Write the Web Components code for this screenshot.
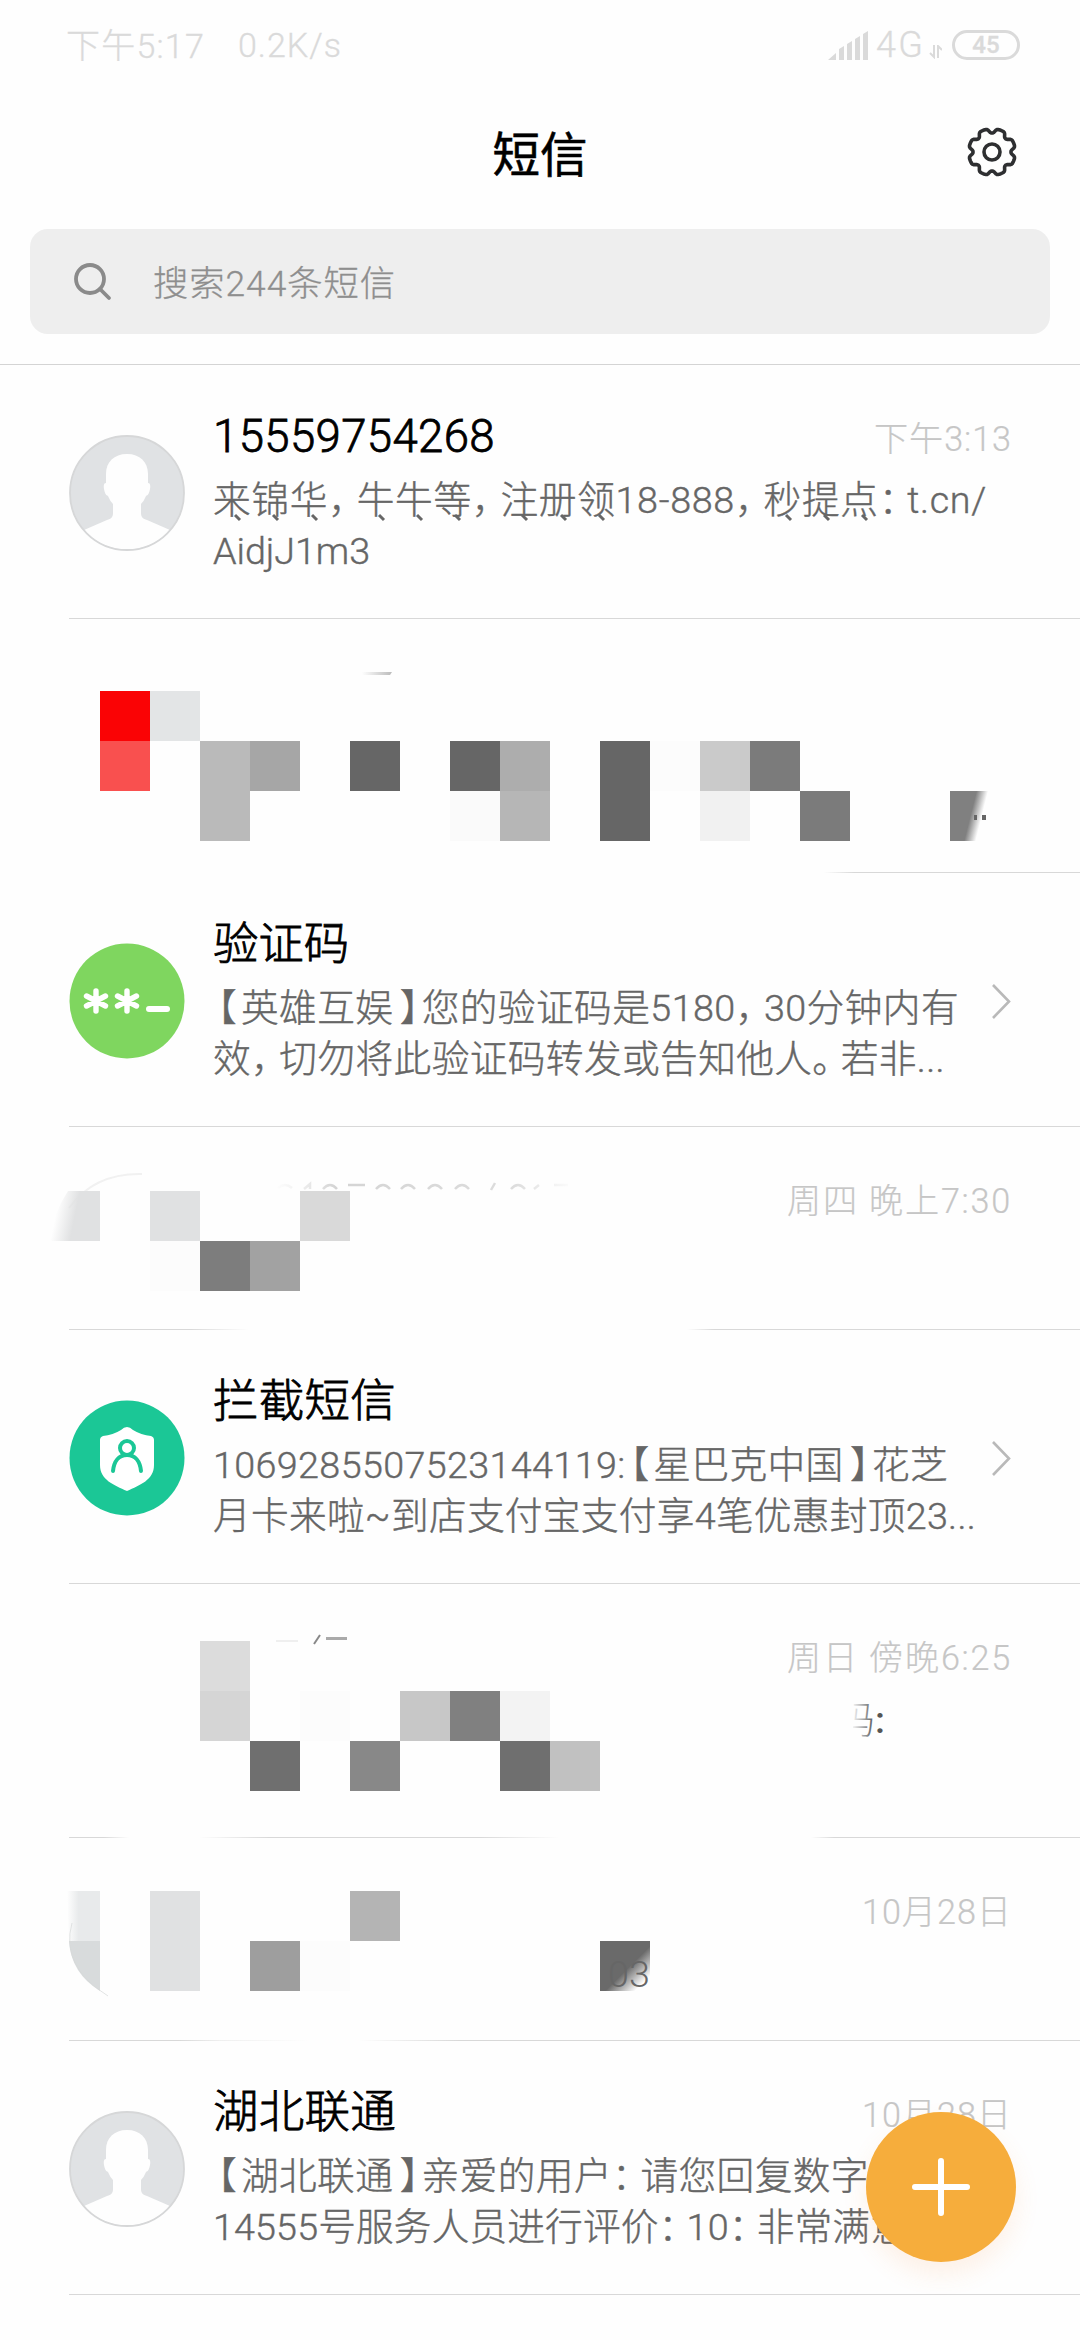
<!DOCTYPE html>
<html lang="zh-CN">
<head>
<meta charset="utf-8">
<title>短信</title>
<style>
  html, body {
    margin: 0;
    background: #fefefe;
  }
  body {
    width: 1080px;
    height: 2340px;
    overflow: hidden;
    font-family: Roboto, "Noto Sans CJK SC", sans-serif;
    font-weight: 300;
  }
</style>
</head>
<body>
<sms-app>
  <status-bar slot="top"></status-bar>
  <app-header slot="top">短信</app-header>
  <search-box slot="top">搜索244条短信</search-box>

  <msg-row>
    <contact-avatar slot="avatar"></contact-avatar>
    <fit-text slot="name" width="282">15559754268</fit-text>
    <fit-text slot="time" width="138">下午3:13</fit-text>
    <fit-text width="774"><u>来</u><u>锦</u><u>华</u>，<u>牛</u><u>牛</u><u>等</u>，<u>注</u><u>册</u><u>领</u>18-888，<u>秒</u><u>提</u><u>点</u>：t.cn/</fit-text>
    <fit-text width="157">AidjJ1m3</fit-text>
  </msg-row>

  <msg-row style="--line: linear-gradient(90deg, transparent 755px, #d8d8d8 785px)">
    <svg slot="mosaic" viewBox="0 618 1080 254">
      <defs>
        <linearGradient id="fadeR" x1="0" y1="0" x2="1" y2=".25"><stop offset=".5" stop-color="#808080"/><stop offset=".72" stop-color="#808080" stop-opacity="0"/></linearGradient>
        <linearGradient id="tip"><stop offset="0" stop-color="#bbb" stop-opacity="0"/><stop offset="1" stop-color="#bbb"/></linearGradient>
      </defs>
      <path d="M362 671h30l-2 3h-28z" fill="url(#tip)"/>
      <path d="M100 690h50v50h-50z" fill="#fa0305"/>
      <path d="M150 690h50v50h-50z" fill="#e3e5e6"/>
      <path d="M100 740h50v50h-50z" fill="#f9504f"/>
      <path d="M200 740h50v100h-50z" fill="#bababa"/>
      <path d="M250 740h50v50h-50z" fill="#a6a6a6"/>
      <path d="M350 740h50v50h-50zM450 740h50v50h-50zM600 740h50v100h-50z" fill="#666"/>
      <path d="M500 740h50v50h-50z" fill="#adadad"/>
      <path d="M650 740h50v50h-50z" fill="#fcfcfc"/>
      <path d="M700 740h50v50h-50z" fill="#cacaca"/>
      <path d="M750 740h50v50h-50zM800 790h50v50h-50z" fill="#7b7b7b"/>
      <path d="M450 790h50v50h-50z" fill="#fafafa"/>
      <path d="M500 790h50v50h-50z" fill="#b6b6b6"/>
      <path d="M700 790h50v50h-50z" fill="#f1f1f1"/>
      <path d="M950 790h50v50h-50z" fill="url(#fadeR)"/>
      <path d="M974 814h3v5h-3zM982 814h4v5h-4z" fill="#666"/>
    </svg>
  </msg-row>

  <msg-row arrow>
    <code-avatar slot="avatar"></code-avatar>
    <fit-text slot="name" width="136">验证码</fit-text>
    <fit-text width="746">【英雄互娱】您的验证码是5180，30分钟内有</fit-text>
    <fit-text width="732">效，切勿将此验证码转发或告知他人。若非...</fit-text>
  </msg-row>

  <msg-row short style="--line: linear-gradient(90deg, #d8d8d8 120px, transparent 180px, transparent 618px, #d8d8d8 645px)">
    <fit-text slot="time" width="225">周四 晚上7:30</fit-text>
    <svg slot="mosaic" viewBox="0 1126 1080 203">
      <defs>
        <linearGradient id="fadeL" x1="0" y1=".4" x2="1" y2=".6"><stop offset=".12" stop-color="#e0e1e2" stop-opacity="0"/><stop offset=".5" stop-color="#e0e1e2"/></linearGradient>
        <linearGradient id="ghost" gradientUnits="userSpaceOnUse" x1="275" y1="0" x2="575" y2="0"><stop offset="0" stop-color="#ddd" stop-opacity="0"/><stop offset=".2" stop-color="#d4d4d4"/><stop offset=".8" stop-color="#ddd"/><stop offset="1" stop-color="#ddd" stop-opacity="0"/></linearGradient>
      </defs>
      <path d="M69 1207Q94 1172 142 1173" fill="none" stroke="#f1f1f1" stroke-width="2"/>
      <path d="M278 1187q7-6 14 0M304 1188l6-5v5M323 1188q7-8 14 0M348 1184h17M376 1188q7-8 14 0M401 1188q7-8 14 0M428 1188q7-8 14 0M455 1188q7-8 14 0M491 1189l4-7M511 1188q7-8 14 0M534 1188l5-4M554 1184h14" fill="none" stroke="url(#ghost)" stroke-width="2.5"/>
      <path d="M68 1190h32v50H50q3-28 18-50z" fill="url(#fadeL)"/>
      <path d="M150 1190h50v50h-50z" fill="#e0e1e2"/>
      <path d="M300 1190h50v50h-50z" fill="#d9d9d9"/>
      <path d="M150 1240h50v50h-50z" fill="#fcfcfc"/>
      <path d="M200 1240h50v50h-50z" fill="#7d7d7d"/>
      <path d="M250 1240h50v50h-50z" fill="#a2a2a2"/>
    </svg>
  </msg-row>

  <msg-row arrow>
    <shield-avatar slot="avatar"></shield-avatar>
    <fit-text slot="name" width="183">拦截短信</fit-text>
    <fit-text width="735">1069285507523144119:【星巴克中国】花芝</fit-text>
    <fit-text width="763">月卡来啦~到店支付宝支付享4笔优惠封顶23...</fit-text>
  </msg-row>

  <msg-row style="--line: linear-gradient(90deg, #d8d8d8 35px, transparent 60px, transparent 130px, #d8d8d8 200px, #d8d8d8 410px, transparent 490px, transparent 742px, #d8d8d8 765px)">
    <fit-text slot="time" width="225">周日 傍晚6:25</fit-text>
    <svg slot="mosaic" viewBox="0 1583 1080 254">
      <defs>
        <linearGradient id="reveal" gradientUnits="userSpaceOnUse" x1="851" y1="0" x2="874" y2="0"><stop offset="0" stop-color="#666" stop-opacity="0"/><stop offset="1" stop-color="#555"/></linearGradient>
        <clipPath id="half"><path d="M853 1690h60v60h-60z"/></clipPath>
      </defs>
      <path d="M314 1643l6-9" stroke="#888" stroke-width="2"/>
      <path d="M326 1636h21v3h-21z" fill="#aaa"/>
      <path d="M276 1640h22" stroke="#efefef" stroke-width="2"/>
      <path d="M200 1640h50v50h-50z" fill="#dcdcdc"/>
      <path d="M200 1690h50v50h-50z" fill="#d5d5d5"/>
      <path d="M300 1690h50v50h-50z" fill="#fcfcfc"/>
      <path d="M400 1690h50v50h-50z" fill="#c7c7c7"/>
      <path d="M450 1690h50v50h-50z" fill="#808080"/>
      <path d="M500 1690h50v50h-50z" fill="#f3f3f3"/>
      <path d="M250 1740h50v50h-50zM500 1740h50v50h-50z" fill="#6f6f6f"/>
      <path d="M350 1740h50v50h-50z" fill="#888"/>
      <path d="M550 1740h50v50h-50z" fill="#c1c1c1"/>
      <text x="837" y="1732" font-size="37.7" fill="url(#reveal)" clip-path="url(#half)">码</text>
      <text x="875" y="1732" font-size="37.7" font-weight="500" fill="#555">:</text>
    </svg>
  </msg-row>

  <msg-row short style="--line: linear-gradient(90deg, #d8d8d8 110px, #efefef 150px, transparent 240px, transparent 290px, #d8d8d8 390px)">
    <fit-text slot="time" width="150">10月28日</fit-text>
    <svg slot="mosaic" viewBox="0 1837 1080 203">
      <defs>
        <linearGradient id="edge"><stop offset="0" stop-color="#e8eaeb" stop-opacity="0"/><stop offset=".35" stop-color="#e8eaeb"/></linearGradient>
        <linearGradient id="corner" x1="0" y1="0" x2="1" y2="1"><stop offset=".55" stop-color="#6a6a6a"/><stop offset=".85" stop-color="#6a6a6a" stop-opacity="0"/></linearGradient>
      </defs>
      <path d="M67 1890h33v50H69z" fill="url(#edge)"/>
      <path d="M69 1940h31v50q-29-18-31-50z" fill="#d8dbdc"/>
      <path d="M72 1922Q60 1965 108 1995" fill="none" stroke="#d5d8d9" stroke-width="1" opacity=".7"/>
      <path d="M150 1890h50v100h-50z" fill="#e0e1e2"/>
      <path d="M350 1890h50v50h-50z" fill="#b4b4b4"/>
      <path d="M250 1940h50v50h-50z" fill="#9e9e9e"/>
      <path d="M300 1940h50v50h-50z" fill="#fcfcfc"/>
      <path d="M600 1940h50v50h-50z" fill="url(#corner)"/>
      <text x="608" y="1986" font-size="37.7" fill="#666">03</text>
    </svg>
  </msg-row>

  <msg-row>
    <contact-avatar slot="avatar"></contact-avatar>
    <fit-text slot="name" width="183">湖北联通</fit-text>
    <fit-text slot="time" width="150">10月28日</fit-text>
    <fit-text width="656">【湖北联通】亲爱的用户：请您回复数字</fit-text>
    <fit-text width="695">14555号服务人员进行评价：10：非常满意</fit-text>
  </msg-row>

  <compose-button slot="float"></compose-button>
</sms-app>

<script>
class ShadowElement extends HTMLElement {
  constructor() {
    super();
    this.attachShadow({mode: 'open'});
    this.shadowRoot.innerHTML = this.constructor.template;
  }
}

class SmsApp extends ShadowElement {
  static get template() {
    return `
    <style>
      :host {
        display: flex;
        flex-direction: column;
        position: relative;
        width: 1080px;
        height: 2340px;
      }
      header {
        box-sizing: border-box;
        height: 365px;
        border-bottom: 1px solid #d4d4d4;
      }
      main {
        display: flex;
        flex-direction: column;
      }
    </style>
    <header><slot name="top"></slot></header>
    <main><slot></slot></main>
    <slot name="float"></slot>`;
  }
}

class StatusBar extends ShadowElement {
  static get template() {
    return `
    <style>
      :host {
        display: flex;
        align-items: center;
        box-sizing: border-box;
        height: 92px;
        padding: 0 60px 0 66px;
        color: #dadada;
        font-size: 34px;
        -webkit-text-stroke: .3px;
      }
      .clock { margin-top: -5px; }
      .speed { margin: -2px auto 0 33px; }
      .network { font-size: 36px; margin: -2px 0 0 7px; }
      .battery {
        display: flex;
        align-items: center;
        justify-content: center;
        box-sizing: border-box;
        width: 68px;
        height: 30px;
        margin: -3px 0 0 10px;
        border: 3px solid #dadada;
        border-radius: 15px;
        font-size: 24px;
        font-weight: 500;
      }
    </style>
    <fit-text class="clock" width="139">下午5:17</fit-text>
    <fit-text class="speed" width="104">0.2K/s</fit-text>
    <svg width="41" height="30" fill="#dadada"><path d="M0 29l8-7v7zM11 18l5-3v14h-5zM19 13l5-3v19h-5zM27 8l5-3v24h-5zM35 3l5-3v29h-5z"/></svg>
    <fit-text class="network" width="49">4G</fit-text>
    <svg width="13" height="14" style="margin:12px 0 0 4px" fill="none" stroke="#dadada" stroke-width="2"><path d="M5 0v12l-4-4M9 13V1l4 4"/></svg>
    <div class="battery">45</div>`;
  }
}

class AppHeader extends ShadowElement {
  static get template() {
    return `
    <style>
      :host {
        display: grid;
        grid-template-columns: 1fr auto 1fr;
        align-items: center;
        box-sizing: border-box;
        height: 137px;
        padding: 0 62px;
        color: #000;
        font-size: 47.5px;
        font-weight: 400;
        -webkit-text-stroke: .6px;
      }
      .title { grid-column: 2; margin-top: -19px; }
      svg { justify-self: end; margin-top: -17px; }
    </style>
    <span class="title"><slot></slot></span>
    <svg width="52" height="52" viewBox="-26 -26 52 52" fill="none" stroke="#2e2f31" stroke-width="3.6" stroke-linejoin="round">
      <path class="gear"/>
      <circle r="8"/>
    </svg>`;
  }

  // eight flat teeth, with the notches on the axes and diagonals
  connectedCallback() {
    const points = [];
    for (let deg = 0; deg < 360; deg += 2.5) {
      const fromNotch = Math.min(deg % 45, 45 - deg % 45);
      const radius = 23.4 - 4.4 * Math.exp(-Math.pow(fromNotch / 9.5, 3));
      const rad = deg * Math.PI / 180;
      points.push(`${(radius * Math.cos(rad)).toFixed(2)} ${(radius * Math.sin(rad)).toFixed(2)}`);
    }
    this.shadowRoot.querySelector('.gear').setAttribute('d', `M${points.join('L')}Z`);
  }
}

class SearchBox extends ShadowElement {
  static get template() {
    return `
    <style>
      :host {
        display: flex;
        align-items: center;
        box-sizing: border-box;
        height: 105px;
        margin: 0 30px;
        padding-left: 43px;
        gap: 41px;
        border-radius: 18px;
        background: #eee;
        color: #8e8e8e;
        font-size: 35.3px;
        -webkit-text-stroke: .3px;
      }
      fit-text { margin-top: -3px; }
    </style>
    <svg width="39" height="39" fill="none" stroke="#8a8a8a" stroke-width="3.8" stroke-linecap="round"><circle cx="17" cy="17" r="14"/><path d="M27 27l9 9"/></svg>
    <fit-text width="243"><slot></slot></fit-text>`;
  }
}

// One line of text whose tracking is set so that it takes up the given width
class FitText extends ShadowElement {
  static get template() {
    return `
    <style>
      :host { display: block; white-space: nowrap; }
      .line { display: inline-block; }
    </style>
    <span class="line"><slot></slot></span>`;
  }

  connectedCallback() {
    if (!this.ready) {
      this.ready = true;
      this.prepare();
    }
    this.fit();
  }

  // punctuation is set half width, with a little air on its open side
  prepare() {
    const margins = {'【': '0 .1em 0 .13em', '】': '0 .07em 0 .17em'};
    for (const node of [...this.childNodes]) {
      if (node.nodeType !== Node.TEXT_NODE) continue;
      const parts = node.data.split(/([，。：【】])/);
      if (parts.length === 1) continue;
      node.replaceWith(...parts.filter(Boolean).map(part => {
        if (!/^[，。：【】]$/.test(part)) return part;
        const span = document.createElement('span');
        span.textContent = part;
        span.style.fontFeatureSettings = '"halt"';
        span.style.margin = margins[part] || '0 .24em 0 0';
        return span;
      }));
    }
    for (const mark of this.querySelectorAll('u')) {
      mark.style.cssText = 'text-decoration:none;position:relative';
      const tick = document.createElement('i');
      tick.style.cssText = 'position:absolute;left:23px;bottom:1px;width:3px;height:7px;background:#666;transform:rotate(-45deg)';
      mark.append(tick);
    }
  }

  fit() {
    const target = parseFloat(this.getAttribute('width'));
    const line = this.shadowRoot.querySelector('.line');
    line.style.letterSpacing = '0';
    const count = (this.textContent.trim() || this.getRootNode().host.textContent.trim()).length;
    const spacing = (target - line.getBoundingClientRect().width) / count;
    line.style.letterSpacing = `${spacing}px`;
  }
}

class MsgRow extends ShadowElement {
  static get template() {
    return `
    <style>
      :host {
        display: grid;
        grid-template-columns: 144px 1fr;
        position: relative;
        box-sizing: border-box;
        height: 254px;
        padding: 0 0 0 69px;
        --line: #d8d8d8;
      }
      :host([short]) { height: 203px; }
      :host::after {
        content: "";
        position: absolute;
        left: 69px;
        right: 0;
        bottom: 0;
        height: 1px;
        background: var(--line);
      }
      .avatar { padding-top: 70px; }
      .head {
        display: flex;
        justify-content: space-between;
        align-items: center;
        height: 60px;
        margin-top: 42px;
        padding-right: 68px;
      }
      .name { color: #000; font-size: 45.5px; line-height: 60px; -webkit-text-stroke: .8px; }
      .time { color: #c6c6c6; font-size: 34.2px; line-height: 50px; padding-top: 3px; -webkit-text-stroke: .2px; }
      .body { color: #666; font-size: 37.7px; line-height: 51px; margin-top: 8px; -webkit-text-stroke: .4px; }
      .arrow { display: none; position: absolute; right: 68px; top: 110px; }
      :host([arrow]) .arrow { display: block; }
      ::slotted(svg) { position: absolute; left: 0; top: 0; width: 1080px; height: 100%; }
    </style>
    <div class="avatar"><slot name="avatar"></slot></div>
    <div>
      <div class="head">
        <div class="name"><slot name="name"></slot></div>
        <div class="time"><slot name="time"></slot></div>
      </div>
      <div class="body"><slot></slot></div>
    </div>
    <svg class="arrow" width="21" height="37" fill="none" stroke="#b9b9b9" stroke-width="2.6"><path d="M2 2l16 16.500l-16 16.500"/></svg>
    <slot name="mosaic"></slot>`;
  }
}

const avatarStyle = '<style>:host { display: block; width: 116px; height: 116px; } svg { display: block; }</style>';

class ContactAvatar extends ShadowElement {
  static get template() {
    return `${avatarStyle}
    <svg width="116" height="116">
      <circle cx="58" cy="58" r="57.200" fill="#e0e2e4"/>
      <path fill="#fefefe" d="M58 19c13 0 21 8 21 20v9q3 0 2 6c-1 5-2 6-4 7q-2 5-5 8v9c0 4 2 6 6 7l23 10A57 57 0 0 1 15 95l23-10c4-1 6-3 6-7v-9q-3-3-5-8c-2-1-3-2-4-7q-1-6 2-6v-9c0-12 8-20 21-20z"/>
      <circle cx="58" cy="58" r="57" fill="none" stroke="#d6d7d8" stroke-width="1.800"/>
    </svg>`;
  }
}

class CodeAvatar extends ShadowElement {
  static get template() {
    return `${avatarStyle}
    <svg width="116" height="116" stroke="#fff" stroke-width="5.400" stroke-linecap="round">
      <circle cx="58" cy="58" r="57.500" fill="#7fd65f" stroke="none"/>
      <path d="M27 48v20M17.500 53l19 10M17.500 63l19-10M58 48v20M48.500 53l19 10M48.500 63l19-10"/>
      <path d="M80 66h18" stroke-width="6"/>
    </svg>`;
  }
}

class ShieldAvatar extends ShadowElement {
  static get template() {
    return `${avatarStyle}
    <svg width="116" height="116">
      <circle cx="58" cy="58" r="57.500" fill="#1bc796"/>
      <path fill="#fff" d="M58 27q3 0 6 3 8 5 18 6 3 1 3 4v25c0 15-14 20-27 26-13-6-27-11-27-26V40q0-3 3-4 10-1 18-6 3-3 6-3z"/>
      <g fill="none" stroke="#1bc796" stroke-width="4" stroke-linecap="round"><circle cx="58" cy="48" r="7"/><path d="M44 71c1-10 6-16 14-16s13 6 14 16"/></g>
    </svg>`;
  }
}

class ComposeButton extends ShadowElement {
  static get template() {
    return `
    <style>
      :host {
        position: absolute;
        left: 866px;
        top: 2112px;
        width: 150px;
        height: 150px;
        border-radius: 50%;
        background: #f6ad3c;
        box-shadow: 0 12px 24px rgba(246, 140, 60, .12);
      }
    </style>
    <svg width="150" height="150" stroke="#fff" stroke-width="6" stroke-linecap="round"><path d="M75 49v52M49 75h52"/></svg>`;
  }
}

customElements.define('fit-text', FitText);
customElements.define('contact-avatar', ContactAvatar);
customElements.define('code-avatar', CodeAvatar);
customElements.define('shield-avatar', ShieldAvatar);
customElements.define('status-bar', StatusBar);
customElements.define('app-header', AppHeader);
customElements.define('search-box', SearchBox);
customElements.define('msg-row', MsgRow);
customElements.define('compose-button', ComposeButton);
customElements.define('sms-app', SmsApp);

// the rows only have their final font sizes once every element is defined
function refit(root) {
  for (const el of root.querySelectorAll('*')) {
    if (el instanceof FitText) el.fit();
    if (el.shadowRoot) refit(el.shadowRoot);
  }
}
refit(document);
</script>
</body>
</html>
